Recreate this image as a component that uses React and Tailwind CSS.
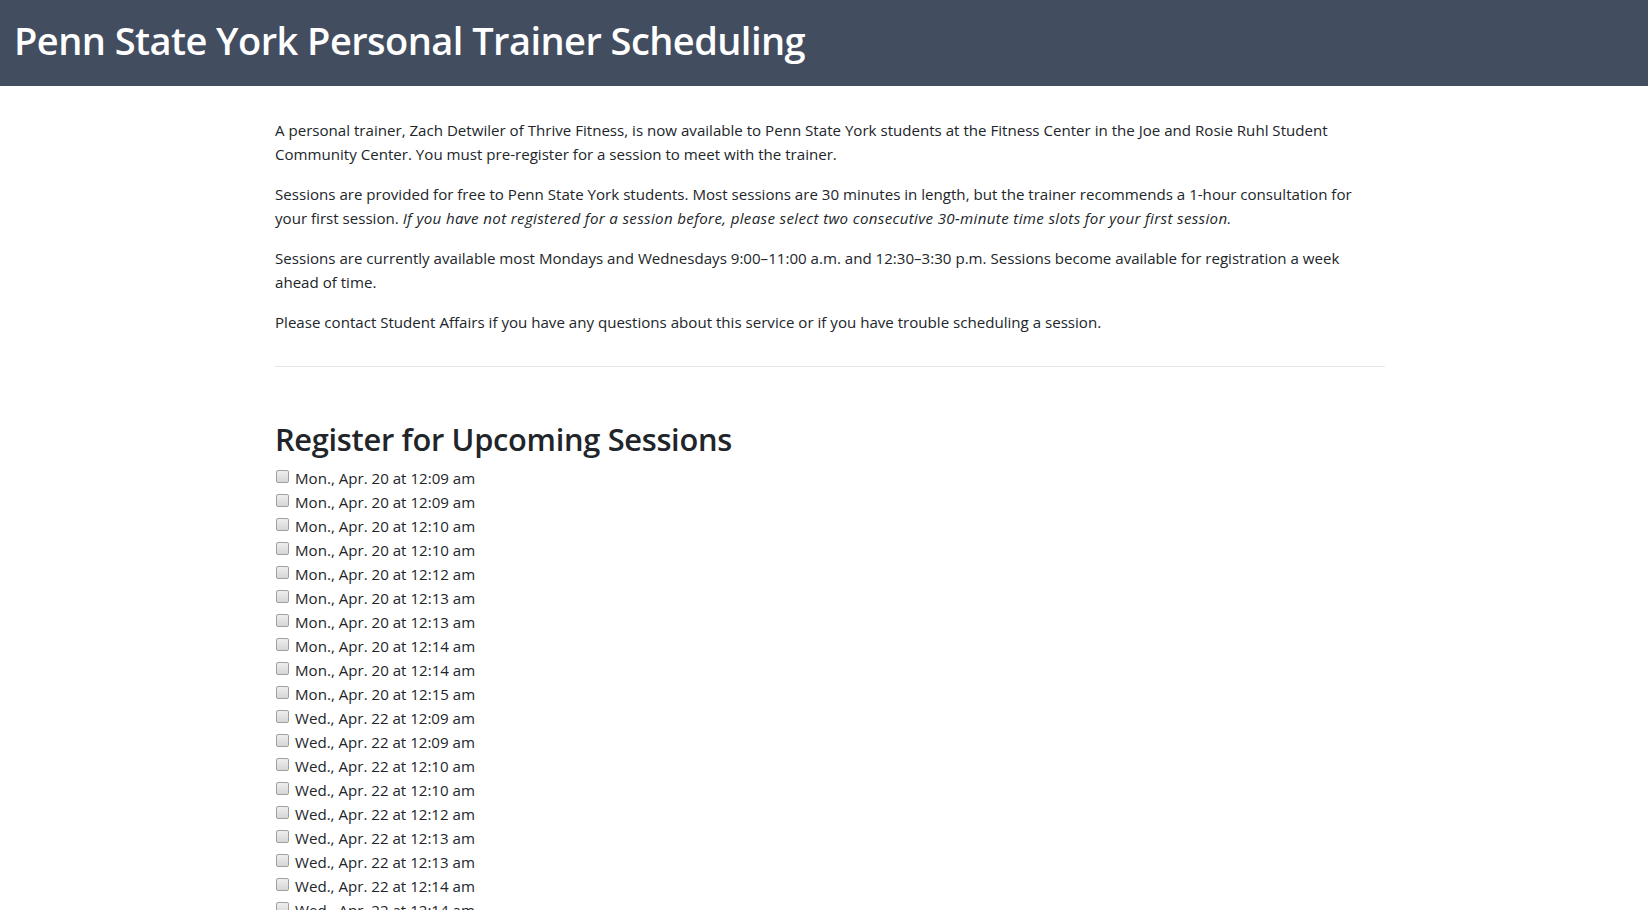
import React from "react";

const mon = ["12:09", "12:09", "12:10", "12:10", "12:12", "12:13", "12:13", "12:14", "12:14", "12:15"];

export default function App() {
  const items = [
    ...mon.map((t) => `Mon., Apr. 20 at ${t} am`),
    ...mon.map((t) => `Wed., Apr. 22 at ${t} am`),
  ];
  return (
    <div className="min-h-screen bg-white text-[#212529]" style={{ fontFamily: '"Open Sans", "Noto Sans", sans-serif' }}>
      <header className="h-[86px] bg-[#434d60] flex items-center px-[14px] pb-[6px]">
        <h1 className="text-white text-[38px] font-semibold leading-none tracking-[-0.55px]">Penn State York Personal Trainer Scheduling</h1>
      </header>
      <main className="ml-[275px] w-[1110px] pt-[32px] text-[15.1px] leading-[24px]">
        <p className="mb-4">
          A personal trainer, Zach Detwiler of Thrive Fitness, is now available to Penn State York students at the Fitness Center in the Joe and Rosie Ruhl Student Community Center. You must pre-register for a session to meet with the trainer.
        </p>
        <p className="mb-4">
          Sessions are provided for free to Penn State York students. Most sessions are 30 minutes in length, but the trainer recommends a 1-hour consultation for your first session. <em className="tracking-[0.35px]">If you have not registered for a session before, please select two consecutive 30-minute time slots for your first session.</em>
        </p>
        <p className="mb-4">
          Sessions are currently available most Mondays and Wednesdays 9:00–11:00 a.m. and 12:30–3:30 p.m. Sessions become available for registration a week ahead of time.
        </p>
        <p className="mb-4">
          Please contact Student Affairs if you have any questions about this service or if you have trouble scheduling a session.
        </p>
        <hr className="mt-8 mb-4 border-t border-[#e5e5e5]" />
        <h2 className="mt-[53px] mb-2 text-[30.8px] leading-[38px] font-semibold tracking-[-0.3px]">Register for Upcoming Sessions</h2>
        <div className="flex flex-col">
          {items.map((label, i) => (
            <label key={i} className="flex items-center h-[24px]">
              <span className="w-[13px] h-[13px] mr-[6px] ml-[1px] -mt-[3px] rounded-[2px] border border-[#a0a0a0] bg-gradient-to-b from-[#eeeeee] to-[#d6d6d6] shrink-0" />
              <span>{label}</span>
            </label>
          ))}
        </div>
      </main>
    </div>
  );
}
